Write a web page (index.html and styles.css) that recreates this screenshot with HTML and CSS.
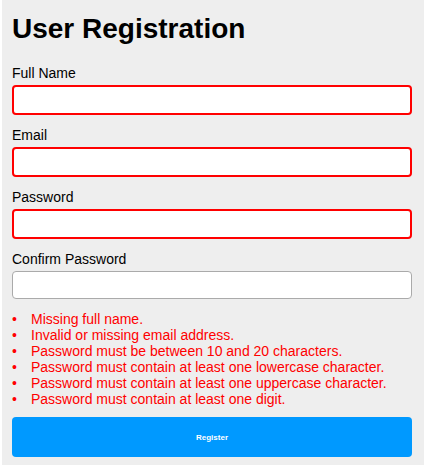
FILE: index.html
```html
<!DOCTYPE html>
<html lang="en">
<head>
<meta charset="utf-8">
<title>User Registration</title>
<link rel="stylesheet" href="styles.css">
</head>
<body>
<div class="page">
  <h1 class="title">User Registration</h1>
  <form class="form">
    <div class="field">
      <label class="label" for="name">Full Name</label>
      <input class="input input-error" id="name" type="text">
    </div>
    <div class="field">
      <label class="label" for="email">Email</label>
      <input class="input input-error" id="email" type="text">
    </div>
    <div class="field">
      <label class="label" for="pw">Password</label>
      <input class="input input-error" id="pw" type="password">
    </div>
    <div class="field">
      <label class="label" for="pw2">Confirm Password</label>
      <input class="input" id="pw2" type="password">
    </div>
    <ul class="errors">
      <li>Missing full name.</li>
      <li>Invalid or missing email address.</li>
      <li>Password must be between 10 and 20 characters.</li>
      <li>Password must contain at least one lowercase character.</li>
      <li>Password must contain at least one uppercase character.</li>
      <li>Password must contain at least one digit.</li>
    </ul>
    <button class="submit" type="button">Register</button>
  </form>
</div>
</body>
</html>
```
FILE: styles.css
```css
html, body {
  margin: 0;
  padding: 0;
  background: #ffffff;
}
body {
  font-family: "Liberation Sans", Arial, sans-serif;
  color: #000;
}
.page {
  margin-left: 2px;
  background: #eeeeee;
  padding: 13px 10px 7px 10px;
  min-height: 445px;
}
.title {
  margin: 0 0 20px 0;
  font-size: 28px;
  font-weight: bold;
  line-height: 32px;
}
.form {
  width: 400px;
  display: flex;
  flex-direction: column;
}
.field {
  display: flex;
  flex-direction: column;
  margin-bottom: 12px;
}
.label {
  font-size: 14px;
  line-height: 16px;
  margin-bottom: 4px;
}
.input {
  box-sizing: border-box;
  width: 400px;
  height: 28px;
  margin: 0;
  background: #fff;
  border: 1px solid #aaaaaa;
  border-radius: 4px;
  padding: 0 8px;
  font-family: inherit;
  font-size: 14px;
}
.input-error {
  height: 30px;
  border: 2px solid #ff0000;
}
.errors {
  margin: 0 0 10px 0;
  padding: 0;
  list-style: none;
  color: #ff0000;
  font-size: 14px;
  line-height: 16px;
}
.errors li::before {
  content: "\2022";
  display: inline-block;
  width: 19px;
}
.submit {
  box-sizing: border-box;
  width: 400px;
  height: 40px;
  border: none;
  border-radius: 4px;
  background: #0099ff;
  color: #fff;
  font-family: inherit;
  font-size: 8px;
  font-weight: bold;
  padding: 0;
}
```
